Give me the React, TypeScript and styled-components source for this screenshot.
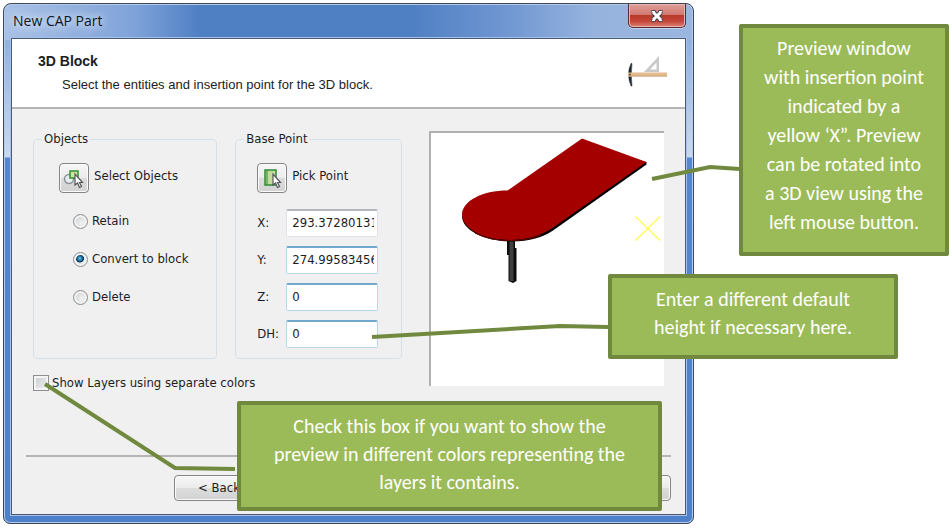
import React from "react";
import styled, { createGlobalStyle, css } from "styled-components";

const uiFont = `"DejaVu Sans Condensed", "DejaVu Sans", sans-serif`;

const GlobalStyle = createGlobalStyle`
  *, *::before, *::after { box-sizing: border-box; }
  body {
    margin: 0;
    background: #fff;
    color: #1c1c24;
    font: 13px/16px ${uiFont};
  }
`;

const Page = styled.main`
  position: relative;
  min-width: 900px;
  padding: 3px 258px 5px 3px;
`;

const DialogWindow = styled.section`
  position: relative;
  padding: 0 7px 8px;
  border: 1px solid #3e4756;
  border-radius: 8px 8px 7px 7px;
  box-shadow: inset 0 0 0 1px #b4cbec;
  background:
    linear-gradient(90deg, #a9c1e6 0, #7fa3d9 130px, #5080c4 195px, #5080c4 410px, #6f96d1 500px, #96b3de 590px, #9ab6df 100%) 0 0 / 100% 36px no-repeat,
    linear-gradient(180deg, #8fb0e0 0, #c9daf0 119px, #5586cf 120px, #4d80c9 100%) 0 34px no-repeat;
`;

const TitleBar = styled.header`
  display: flex;
  justify-content: space-between;
  align-items: flex-start;
  height: 34px;
  padding-left: 2px;
`;

const WindowTitle = styled.h1`
  margin: 7px 0 0;
  color: #10141c;
  font: 14px/20px "Open Sans", "Noto Sans", sans-serif;
  text-shadow: 0 0 7px #e8f0fc, 0 0 12px #e8f0fc;
`;

const CloseButton = styled.button`
  display: flex;
  justify-content: center;
  align-items: center;
  width: 58px;
  height: 24px;
  padding: 0;
  border: 1px solid #5a2a34;
  border-top: 0;
  border-radius: 0 0 5px 5px;
  background: linear-gradient(#dfa09a 0, #d0776f 48%, #b93a2b 50%, #c4473a 75%, #dd8272 100%);
  box-shadow: inset 0 0 0 1px #e3b5b3, 0 1px 0 #c5d6ef;
`;

const Client = styled.div`
  border: 1px solid #4a5a74;
  background: #f0f0f0;
  box-shadow: 0 0 0 1px #a7c1e8;
`;

const Banner = styled.header`
  display: flex;
  justify-content: space-between;
  align-items: flex-start;
  height: 70px;
  padding: 14px 17px 0 26px;
  border-bottom: 2px solid #b5b5b5;
  background: #fff;
`;

const BannerTitle = styled.h2`
  margin: 0;
  font: bold 14px/16px "Liberation Sans", Arial, sans-serif;
`;

const BannerText = styled.p`
  margin: 8px 0 0 24px;
  font: 13px/16px "Liberation Sans", Arial, sans-serif;
`;

const Body = styled.div`
  display: grid;
  grid-template-columns: 184fr 166fr 244fr;
  column-gap: 18px;
  align-items: start;
  padding: 22px 21px 0 21px;
`;

const Group = styled.fieldset`
  min-width: 0;
  height: 228px;
  margin: 0;
  padding: 0 8px;
  border: 1px solid #d5e1e8;
  border-radius: 4px;
`;

const Legend = styled.legend`
  padding: 0 2px;
`;

const GroupBody = styled.div<{ $indent: number }>`
  display: flex;
  flex-direction: column;
  padding: 16px 0 0 ${(p) => p.$indent}px;
`;

const PickRow = styled.div`
  display: flex;
  gap: 5px;
  line-height: 26px;
  white-space: nowrap;
`;

const buttonFace = css`
  border: 1px solid #858585;
  border-radius: 4px;
  background: linear-gradient(#f6f6f6 0, #ececec 48%, #dcdcdc 52%, #d2d2d2 100%);
  box-shadow: inset 0 0 0 1px #fafafa;
  color: inherit;
  font: inherit;
`;

const ToolButton = styled.button`
  ${buttonFace}
  display: grid;
  place-items: center;
  width: 30px;
  height: 30px;
  padding: 0;
`;

const RadioList = styled.div`
  display: flex;
  flex-direction: column;
  padding: 9px 0 0 14px;
`;

const RadioLabel = styled.label`
  display: flex;
  align-items: center;
  gap: 4px;
  height: 38px;
`;

const Radio = styled.input`
  appearance: none;
  width: 15px;
  height: 15px;
  margin: 0;
  border: 1px solid #8e8f8f;
  border-radius: 50%;
  background: radial-gradient(circle at 60% 60%, #f2f2f2 0, #cfd3d6 70%);
  box-shadow: inset 0 0 0 2px #f4f4f4;

  &:checked {
    background: radial-gradient(circle at 45% 42%, #6fd0f2 0, #1c6d9c 22%, #0c3350 36%, #dfe5e9 42%);
  }
`;

const FieldList = styled.div`
  display: grid;
  grid-template-columns: 24px minmax(0, 92px);
  gap: 9px 5px;
  align-items: center;
  padding-top: 16px;
`;

const Field = styled.input<{ $muted?: boolean }>`
  width: 100%;
  height: 28px;
  padding: 0 3px 2px 5px;
  border: 1px solid ${(p) => (p.$muted ? "#e2e3ea" : "#b7d7ec")};
  border-top: 2px solid ${(p) => (p.$muted ? "#b3b5bf" : "#72a7cc")};
  border-radius: 2px;
  background: #fff;
  color: inherit;
  font: 13px/20px ${uiFont};
`;

const Preview = styled.div`
  grid-column: 3;
  grid-row: 1 / span 2;
  height: 255px;
  margin-left: 9px;
  border-top: 2px solid #b0b0b0;
  border-left: 2px solid #b0b0b0;
  background: #fff;

  svg { display: block; }
`;

const LayerOption = styled.label`
  grid-column: 1 / span 2;
  display: flex;
  align-items: center;
  gap: 3px;
  padding-top: 16px;
`;

const Checkbox = styled.input`
  appearance: none;
  width: 16px;
  height: 16px;
  margin: 0;
  border: 1px solid #8e8f8f;
  background: linear-gradient(135deg, #c6cad0, #f4f4f4);
  box-shadow: inset 0 0 0 2px #f4f4f4;
`;

const Footer = styled.footer`
  display: flex;
  justify-content: space-between;
  margin: 64px 14px 0 14px;
  padding: 18px 0 13px 148px;
  border-top: 2px solid #b5b5b5;
`;

const WizardButton = styled.button`
  ${buttonFace}
  width: 90px;
  height: 26px;
  padding: 0;
`;

const Callout = styled.aside<{ $leading: number }>`
  position: absolute;
  border: 4px solid #71893f;
  border-radius: 2px;
  background: #9bbb59;
  color: #fff;
  font: 20px/${(p) => p.$leading}px Carlito, Lato, sans-serif;
  text-align: center;
  white-space: pre-line;
`;

const PreviewCallout = styled(Callout)`
  top: 24px;
  right: 3px;
  width: 210px;
  padding: 6px 0 15px;
`;

const HeightCallout = styled(Callout)`
  top: 274px;
  right: 54px;
  width: 290px;
  padding: 7px 0 14px;
`;

const LayersCallout = styled(Callout)`
  top: 401px;
  left: 237px;
  right: 290px;
  padding: 7px 0 11px;
`;

const Connector = styled.svg`
  position: absolute;
  fill: none;
  stroke: #71893f;
  stroke-width: 4;
`;

const PreviewConnector = styled(Connector)`
  top: 160px;
  right: 212px;
`;

const HeightConnector = styled(Connector)`
  top: 320px;
  left: 370px;
`;

const LayersConnector = styled(Connector)`
  top: 380px;
  left: 40px;
`;

function CloseGlyph() {
  return (
    <svg width="16" height="14" viewBox="0 0 16 14" aria-hidden="true">
      <path d="M4 3 L12 11 M12 3 L4 11" stroke="#4a4656" strokeWidth="5" />
      <path d="M2.5 2.5h4 M9.500 2.500h4 M2.500 11.500h4 M9.500 11.500h4" stroke="#4a4656" strokeWidth="3" />
      <path d="M4 3 L12 11 M12 3 L4 11" stroke="#fff" strokeWidth="3" />
      <path d="M3 2.500h3 M10 2.500h3 M3 11.500h3 M10 11.500h3" stroke="#fff" strokeWidth="1" />
    </svg>
  );
}

function DraftingIcon() {
  return (
    <svg width="42" height="34" viewBox="0 0 42 34" aria-hidden="true">
      <path fillRule="evenodd" d="M33 3 V19 H18 Z M30.500 9.500 V16.500 H24 Z" fill="#c9c9c9" />
      <path d="M5 10.500 Q0 21 5 33 L6 33 Q4.500 21 6 10.500 Z" fill="#1d2733" stroke="#1d2733" strokeWidth="0.500" />
      <rect x="2" y="19.500" width="39" height="4" fill="#e2ba8e" />
      <path d="M2 23h39" stroke="#cfa77c" strokeWidth="1" />
      <circle cx="4" cy="21.500" r="1" fill="#6a5038" />
    </svg>
  );
}

const cursorPath = "M14 9 V20 L16.500 18 L18.500 22.500 L20.500 21.500 L18.500 17.500 H21.500 Z";

function SelectIcon() {
  return (
    <svg width="26" height="26" viewBox="0 0 26 26" aria-hidden="true">
      <circle cx="8" cy="14" r="4.500" fill="#e8ecef" stroke="#8b959c" strokeWidth="1.500" />
      <rect x="9" y="6" width="8" height="7" fill="#cfe3a0" stroke="#2f9130" strokeWidth="1.500" />
      <path d={cursorPath} fill="#fff" stroke="#55555c" strokeWidth="1.200" />
    </svg>
  );
}

function PickIcon() {
  return (
    <svg width="26" height="26" viewBox="0 0 26 26" aria-hidden="true">
      <rect x="6" y="5" width="11" height="15" fill="#c3dc9c" stroke="#2f8a35" strokeWidth="1.500" />
      <path d="M8 5v15" stroke="#2f8a35" strokeWidth="1" />
      <path d={cursorPath} fill="#fff" stroke="#55555c" strokeWidth="1.200" />
    </svg>
  );
}

function TableDrawing() {
  return (
    <svg width="100%" height="253" viewBox="431 132 233 253" preserveAspectRatio="xMinYMin meet" role="img" aria-label="3D block preview">
      <path d="M507 238 H515 V247 H516.500 V280 L513 282 L508.500 280 V254 H507 Z" fill="#0c0c0c" />
      <path d="M509.500 240 H513.500 V280 H509.500 Z" fill="#404040" />
      <path
        d="M646.500 161 V163.500 L553 229.500 Q538 240 512 240.500 C484 240.500 462 229 462 215 L470 200 L630 160 Z"
        fill="#000"
      />
      <path
        d="M582 137.500 L646.500 161 L551 228 Q536 238 512 239 C483 239 462 228 462 213 C463 200 482 189.500 507.500 189.500 Z"
        fill="#a40000"
      />
      <path d="M475 232 Q490 240 512 239.500 Q530 239 541 234" fill="none" stroke="#6d0000" strokeWidth="1" />
      <path d="M635.500 215.500 L660 239.500 M660 215.500 L635.500 239.500" stroke="#ffff5e" strokeWidth="1.500" />
    </svg>
  );
}

const objectModes = ["Retain", "Convert to block", "Delete"];

const baseFields = [
  { id: "x", label: "X:", value: "293.37280131", muted: true },
  { id: "y", label: "Y:", value: "274.99583456" },
  { id: "z", label: "Z:", value: "0" },
  { id: "dh", label: "DH:", value: "0" },
];

export default function App() {
  return (
    <>
      <GlobalStyle />
      <Page>
        <DialogWindow aria-label="New CAP Part">
          <TitleBar>
            <WindowTitle>New CAP Part</WindowTitle>
            <CloseButton type="button" aria-label="Close">
              <CloseGlyph />
            </CloseButton>
          </TitleBar>
          <Client>
            <Banner>
              <div>
                <BannerTitle>3D Block</BannerTitle>
                <BannerText>Select the entities and insertion point for the 3D block.</BannerText>
              </div>
              <DraftingIcon />
            </Banner>
            <Body>
              <Group>
                <Legend>Objects</Legend>
                <GroupBody $indent={17}>
                  <PickRow>
                    <ToolButton type="button" id="select-objects" aria-label="Select Objects">
                      <SelectIcon />
                    </ToolButton>
                    <label htmlFor="select-objects">Select Objects</label>
                  </PickRow>
                  <RadioList>
                    {objectModes.map((mode) => (
                      <RadioLabel key={mode}>
                        <Radio type="radio" name="mode" defaultChecked={mode === "Convert to block"} />
                        {mode}
                      </RadioLabel>
                    ))}
                  </RadioList>
                </GroupBody>
              </Group>
              <Group>
                <Legend>Base Point</Legend>
                <GroupBody $indent={13}>
                  <PickRow>
                    <ToolButton type="button" id="pick-point" aria-label="Pick Point">
                      <PickIcon />
                    </ToolButton>
                    <label htmlFor="pick-point">Pick Point</label>
                  </PickRow>
                  <FieldList>
                    {baseFields.map((f) => (
                      <React.Fragment key={f.id}>
                        <label htmlFor={f.id}>{f.label}</label>
                        <Field id={f.id} type="text" defaultValue={f.value} $muted={f.muted} />
                      </React.Fragment>
                    ))}
                  </FieldList>
                </GroupBody>
              </Group>
              <Preview>
                <TableDrawing />
              </Preview>
              <LayerOption>
                <Checkbox type="checkbox" />
                Show Layers using separate colors
              </LayerOption>
            </Body>
            <Footer>
              <WizardButton type="button">&lt; Back</WizardButton>
              <WizardButton type="button" aria-label="Help" />
            </Footer>
          </Client>
        </DialogWindow>

        <PreviewConnector width="90" height="24" viewBox="650 160 90 24" aria-hidden="true">
          <path d="M652 179 L710 167 L740 169" />
        </PreviewConnector>
        <HeightConnector width="240" height="20" viewBox="370 320 240 20" aria-hidden="true">
          <path d="M372 337 L560 326 L608 327" />
        </HeightConnector>
        <LayersConnector width="198" height="94" viewBox="40 380 198 94" aria-hidden="true">
          <path d="M45 384 L175 468 L235 469" />
        </LayersConnector>

        <PreviewCallout $leading={29}>
          {"Preview window\nwith insertion point\nindicated by a\nyellow ‘X”. Preview\ncan be rotated into\na 3D view using the\nleft mouse button."}
        </PreviewCallout>
        <HeightCallout $leading={28}>{"Enter a different default\nheight if necessary here."}</HeightCallout>
        <LayersCallout $leading={28}>
          {"Check this box if you want to show the\npreview in different colors representing the\nlayers it contains."}
        </LayersCallout>
      </Page>
    </>
  );
}
